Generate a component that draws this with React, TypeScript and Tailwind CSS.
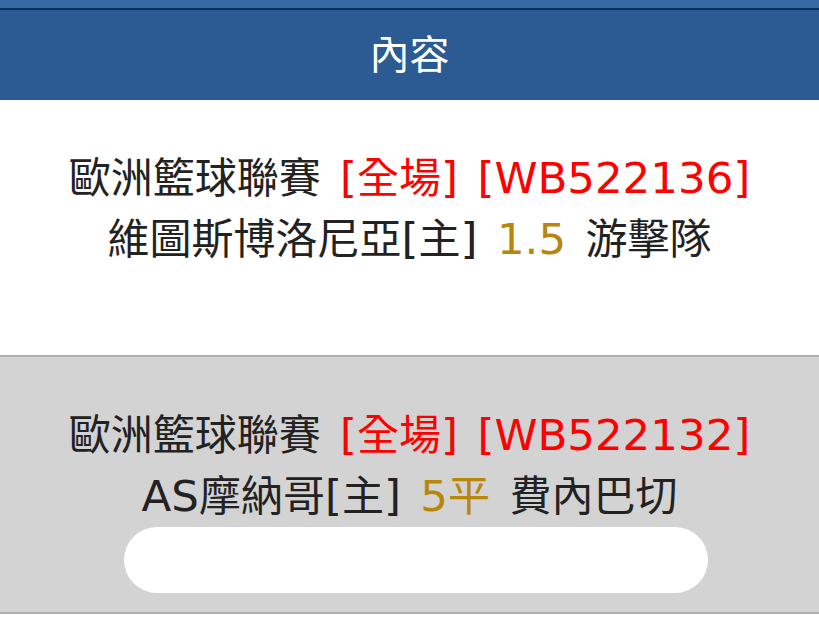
import React from "react";

const font = { fontFamily: '"DejaVu Sans", "Noto Sans CJK TC", sans-serif' };

function L({ children }: { children: React.ReactNode }) {
  return <span className="text-[43.5px]">{children}</span>;
}

export default function App() {
  return (
    <div className="w-[819px] h-[620px] bg-white overflow-hidden" style={font}>
      <div className="h-[8px] bg-[#3669a3]" />
      <div className="h-[2px] bg-[#06305e]" />
      <div className="h-[90px] bg-[#2c5b93] flex items-center justify-center text-white text-[40px]">
        內容
      </div>
      <div className="h-[255px] bg-white flex flex-col items-center pt-[48px] text-[42px] leading-[60px] text-[#222] [word-spacing:6px]">
        <div>
          歐洲籃球聯賽{" "}
          <span className="text-[#ff0000]">
            <L>[</L>全場<L>]</L> <L>[WB522136]</L>
          </span>
        </div>
        <div>
          維圖斯博洛尼亞<L>[</L>主<L>]</L>{" "}
          <span className="text-[#b8860b]">
            <L>1.5</L>
          </span>{" "}
          游擊隊
        </div>
      </div>
      <div className="h-[2px] bg-[#b0b0b0]" />
      <div className="h-[255px] bg-[#d3d3d3] flex flex-col items-center pt-[48px] text-[42px] leading-[60px] text-[#222] [word-spacing:6px]">
        <div>
          歐洲籃球聯賽{" "}
          <span className="text-[#ff0000]">
            <L>[</L>全場<L>]</L> <L>[WB522132]</L>
          </span>
        </div>
        <div>
          <L>AS</L>摩納哥<L>[</L>主<L>]</L>{" "}
          <span className="text-[#b8860b]">
            <L>5</L>平
          </span>{" "}
          費內巴切
        </div>
        <div className="ml-[13px] w-[584px] h-[66px] bg-white rounded-[34px]" />
      </div>
      <div className="h-[2px] bg-[#b0b0b0]" />
    </div>
  );
}
